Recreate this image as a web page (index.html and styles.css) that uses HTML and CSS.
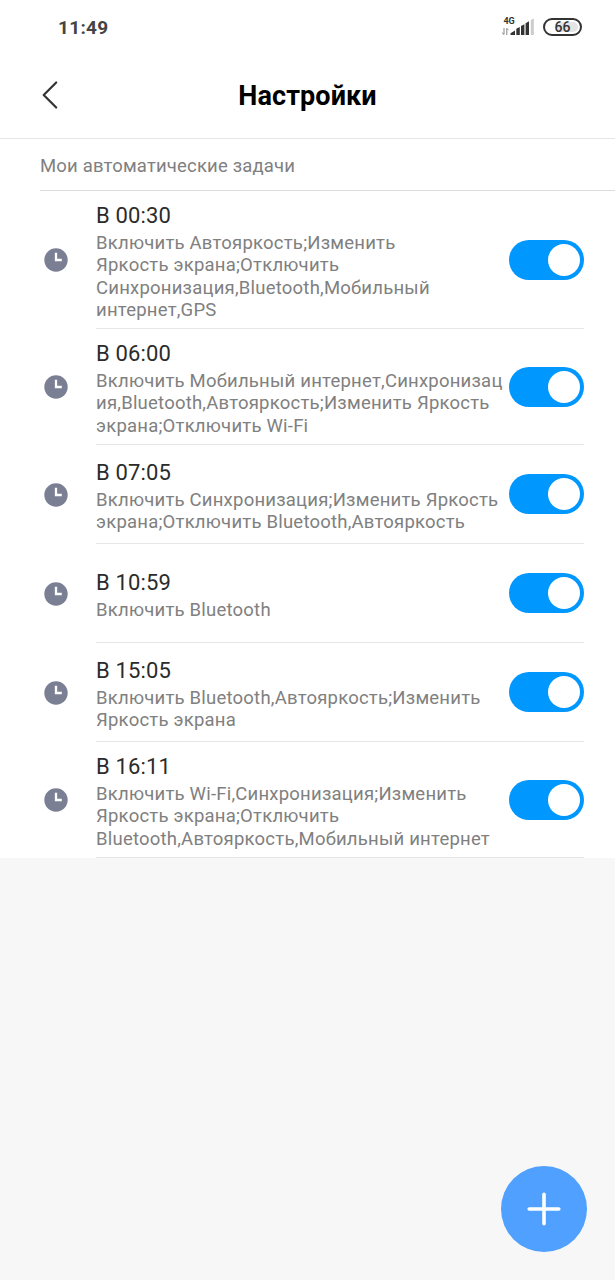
FILE: index.html
```html
<!DOCTYPE html>
<html lang="ru">

<head>
    <meta charset="UTF-8">
    <meta name="viewport" content="width=device-width, initial-scale=1.0">
    <title>Настройки</title>
    <link rel="stylesheet" href="styles.css">
</head>

<body>
    <!-- общие иконки -->
    <svg class="icon-defs" width="0" height="0">
        <symbol id="clock" viewBox="0 0 24 24">
            <circle cx="12" cy="12" r="11.7" fill="#7b7f93"/>
            <path d="M12 4.8V12H17.8" fill="none" stroke="#fff" stroke-width="2.3"/>
        </symbol>
    </svg>

    <!-- строка состояния -->
    <div class="status-bar">
        <div class="status-time">11:49</div>
        <div class="status-icons">
            <svg class="signal" width="34" height="20" viewBox="0 0 34 20">
                <text class="signal-type" x="2.4" y="7.4">4G</text>
                <path d="M3 11V17.5L1 15.6M5.8 18V11.3L7.6 13.2" fill="none" stroke="#888" stroke-width="1"/>
                <path d="M9.5 16.2L14 13.5V18H9.5Z" fill="#333"/>
                <path d="M15.3 11.8L18.8 10V18H15.3ZM20 8.9L23.4 7.2V18H20ZM24.6 6.2L28 4.3V18H24.6Z" fill="#333"/>
                <path d="M29.8 3L32.8 1.5V18H29.8Z" fill="#ccc"/>
            </svg>
            <div class="battery">66</div>
        </div>
    </div>

    <!-- заголовок -->
    <header class="header">
        <svg class="back" width="20" height="30" viewBox="0 0 20 30">
            <path d="M16.2 2.5L3.7 15L16.2 27.5" fill="none" stroke="#333" stroke-width="2.2" stroke-linecap="round" stroke-linejoin="round"/>
        </svg>
        <h1>Настройки</h1>
    </header>

    <!-- список задач -->
    <main class="tasks">
        <div class="section-title">Мои автоматические задачи</div>

        <div class="task task-4">
            <svg class="task-icon"><use href="#clock"/></svg>
            <div class="task-body">
                <div class="task-text">
                    <div class="task-time">В 00:30</div>
                    <div class="task-desc">Включить Автояркость;Изменить<br>Яркость экрана;Отключить<br>Синхронизация,Bluetooth,Мобильный<br>интернет,GPS</div>
                </div>
                <div class="switch"></div>
            </div>
        </div>

        <div class="task task-3">
            <svg class="task-icon"><use href="#clock"/></svg>
            <div class="task-body">
                <div class="task-text">
                    <div class="task-time">В 06:00</div>
                    <div class="task-desc">Включить Мобильный интернет,Синхронизац<br>ия,Bluetooth,Автояркость;Изменить Яркость<br>экрана;Отключить Wi-Fi</div>
                </div>
                <div class="switch"></div>
            </div>
        </div>

        <div class="task">
            <svg class="task-icon"><use href="#clock"/></svg>
            <div class="task-body">
                <div class="task-text">
                    <div class="task-time">В 07:05</div>
                    <div class="task-desc">Включить Синхронизация;Изменить Яркость<br>экрана;Отключить Bluetooth,Автояркость</div>
                </div>
                <div class="switch"></div>
            </div>
        </div>

        <div class="task">
            <svg class="task-icon"><use href="#clock"/></svg>
            <div class="task-body">
                <div class="task-text">
                    <div class="task-time">В 10:59</div>
                    <div class="task-desc">Включить Bluetooth</div>
                </div>
                <div class="switch"></div>
            </div>
        </div>

        <div class="task">
            <svg class="task-icon"><use href="#clock"/></svg>
            <div class="task-body">
                <div class="task-text">
                    <div class="task-time">В 15:05</div>
                    <div class="task-desc">Включить Bluetooth,Автояркость;Изменить<br>Яркость экрана</div>
                </div>
                <div class="switch"></div>
            </div>
        </div>

        <div class="task task-3">
            <svg class="task-icon"><use href="#clock"/></svg>
            <div class="task-body">
                <div class="task-text">
                    <div class="task-time">В 16:11</div>
                    <div class="task-desc">Включить Wi-Fi,Синхронизация;Изменить<br>Яркость экрана;Отключить<br>Bluetooth,Автояркость,Мобильный интернет</div>
                </div>
                <div class="switch"></div>
            </div>
        </div>
    </main>

    <!-- кнопка добавления -->
    <div class="add-button">
        <svg width="36" height="36" viewBox="0 0 36 36">
            <path d="M18 3.2V32.8M3.2 18H32.8" fill="none" stroke="#fff" stroke-width="3.6" stroke-linecap="round"/>
        </svg>
    </div>
</body>

</html>
```
FILE: styles.css
```css
* {
    box-sizing: border-box;
}

body {
    margin: 0;
    min-height: 100vh;
    font-family: Roboto, "Noto Sans", sans-serif;
    background-color: #f7f7f7;
    color: #333;
    overflow: hidden;
}

.icon-defs {
    position: absolute;
}

/* строка состояния */
.status-bar {
    display: flex;
    justify-content: space-between;
    align-items: center;
    height: 54px;
    padding: 0 33px 0 58px;
    background: #fff;
}

.status-time {
    font-size: 19px;
    font-weight: 700;
    letter-spacing: 0.3px;
    color: #444;
}

.status-icons {
    display: flex;
    align-items: center;
    gap: 8px;
}

.signal-type {
    font-size: 9px;
    font-weight: 700;
    fill: #333;
}

.battery {
    width: 39px;
    height: 18px;
    border: 2px solid #333;
    border-radius: 9px;
    background: linear-gradient(to right, #fff 35%, #e4e4e4 35%);
    box-shadow: inset 0 0 0 2px #fff;
    font-size: 14px;
    font-weight: 500;
    line-height: 15px;
    text-align: center;
}

/* заголовок */
.header {
    display: flex;
    align-items: center;
    height: 85px;
    padding: 0 40px;
    border-bottom: 1px solid #e6e6e6;
    background: #fff;
}

.back {
    margin-top: -2px;
}

.header h1 {
    flex: 1;
    margin: 0 20px 0 0;
    font-size: 27px;
    font-weight: 700;
    letter-spacing: 0.1px;
    text-align: center;
    color: #000;
}

/* список задач */
.tasks {
    background: #fff;
}

.section-title {
    height: 52px;
    margin-left: 40px;
    border-bottom: 1px solid #dcdcdc;
    font-size: 18.5px;
    line-height: 54px;
    letter-spacing: 0.17px;
    color: #808080;
}

.task {
    display: flex;
    align-items: center;
    height: 99px;
    padding: 0 31px 0 44px;
}

.task-3 {
    height: 116px;
}

.task-4 {
    height: 138px;
}

.task-icon {
    flex: none;
    width: 24px;
    height: 24px;
    margin-right: 28px;
}

.task-body {
    flex: 1;
    display: flex;
    align-items: center;
    justify-content: space-between;
    height: 100%;
    border-bottom: 1px solid #e6e6e6;
}

.task-text {
    width: 412px;
    padding-top: 3px;
    white-space: nowrap;
}

.task-time {
    font-size: 22px;
    line-height: 30px;
    letter-spacing: 0.15px;
    color: #2b2b2b;
}

.task-desc {
    margin-top: 1px;
    font-size: 18.5px;
    line-height: 22.3px;
    letter-spacing: 0.22px;
    color: #808080;
}

/* переключатель */
.switch {
    flex: none;
    display: flex;
    align-items: center;
    justify-content: flex-end;
    width: 75px;
    height: 40px;
    margin-left: -1px;
    padding-right: 4px;
    border-radius: 20px;
    background: #0097ff;
}

.switch::after {
    content: "";
    width: 32px;
    height: 32px;
    border-radius: 50%;
    background: #fff;
}

/* кнопка добавления */
.add-button {
    position: fixed;
    right: 28px;
    bottom: 28px;
    display: flex;
    align-items: center;
    justify-content: center;
    width: 86px;
    height: 86px;
    border-radius: 50%;
    background: #50a0ff;
}
```
